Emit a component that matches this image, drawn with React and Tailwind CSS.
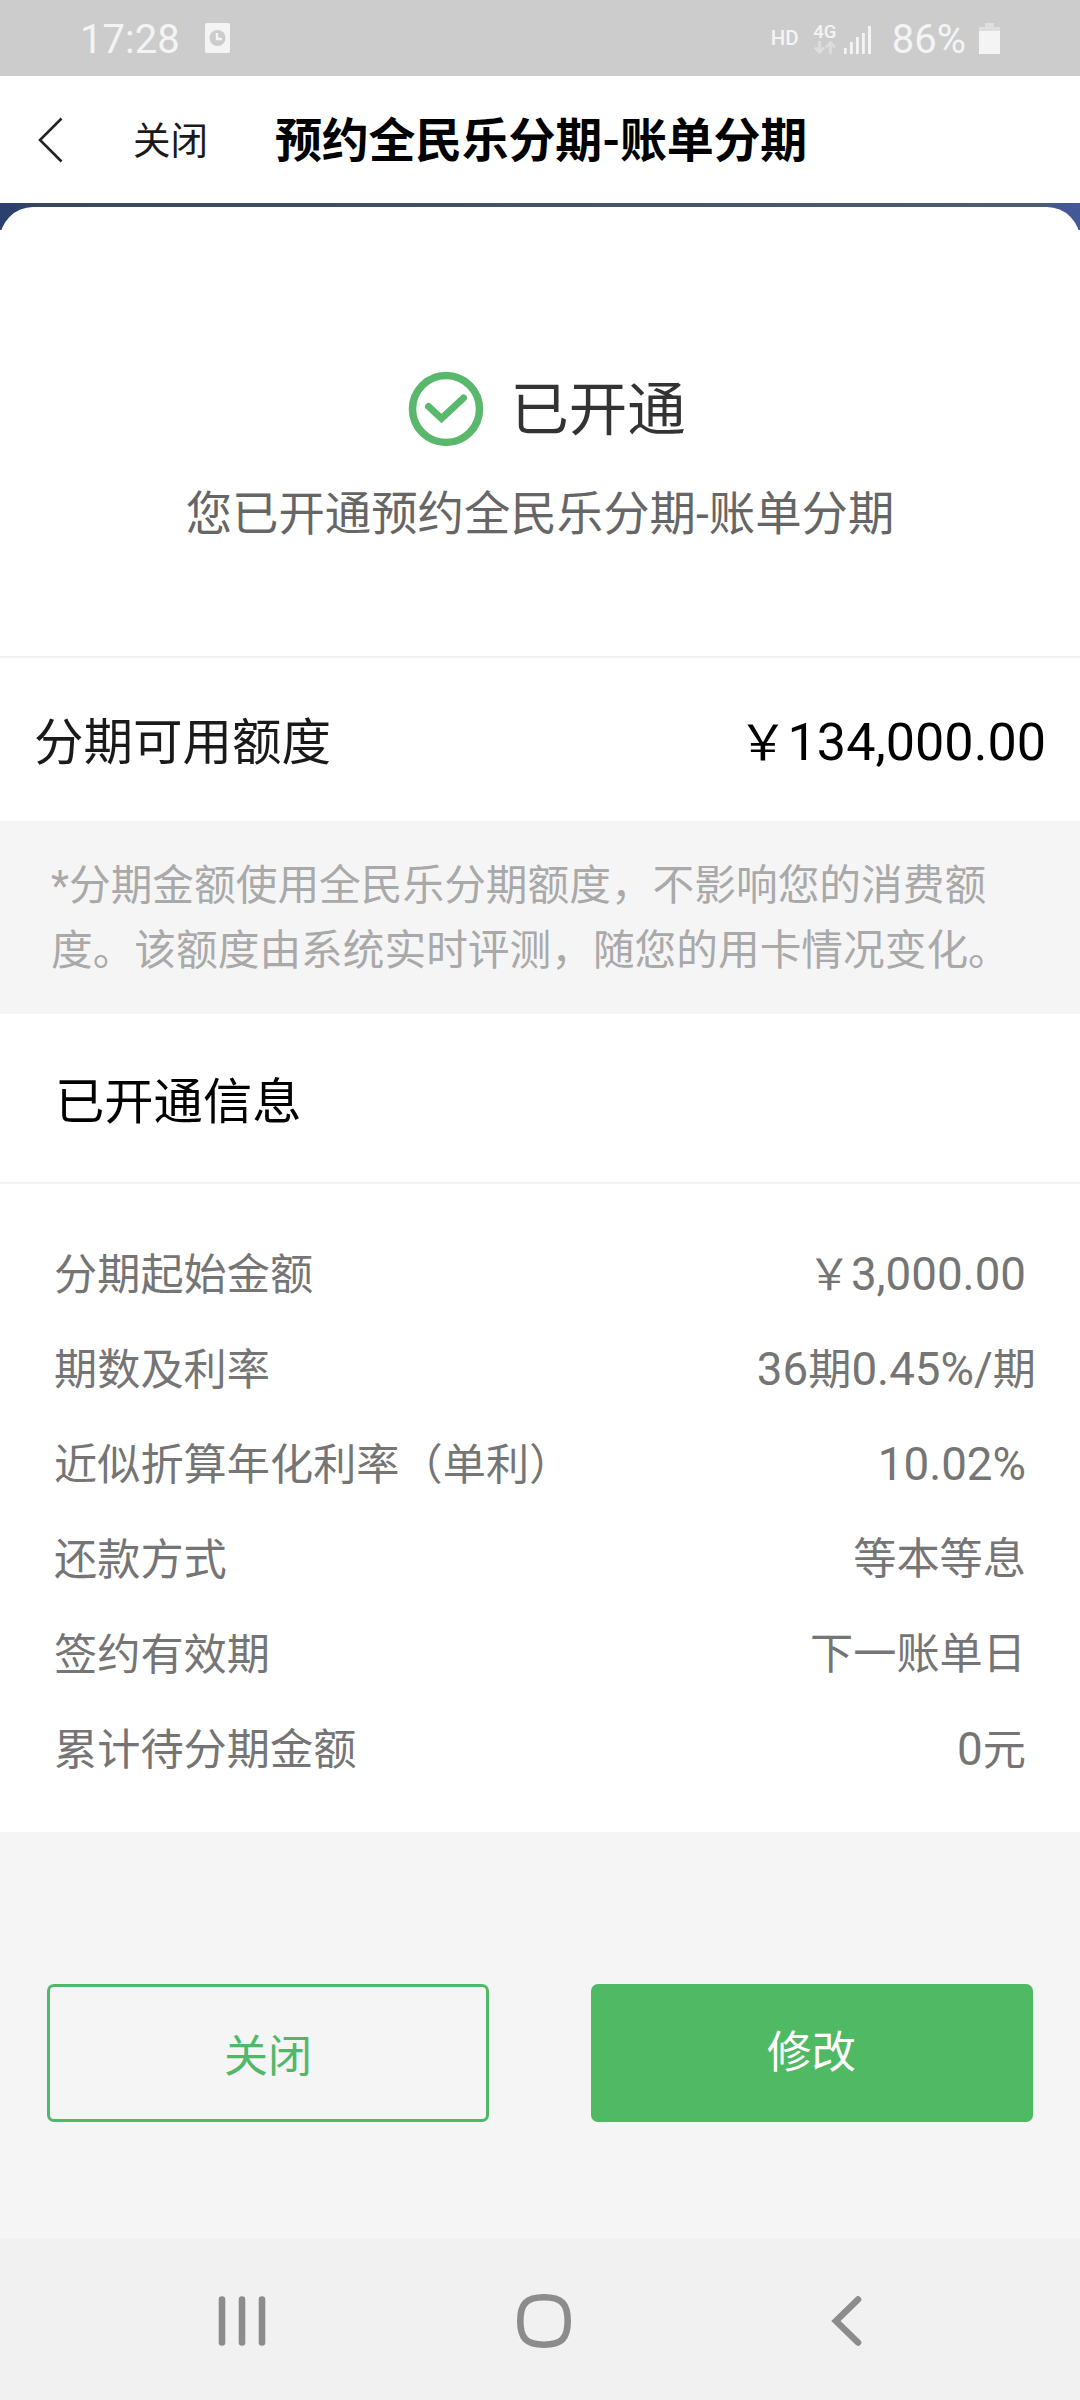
import { Fragment } from "react"

const details = [
  { label: "分期起始金额", value: "￥3,000.00" },
  { label: "期数及利率", value: "36期0.45%/期", wide: true },
  { label: "近似折算年化利率（单利）", value: "10.02%" },
  { label: "还款方式", value: "等本等息" },
  { label: "签约有效期", value: "下一账单日" },
  { label: "累计待分期金额", value: "0元" },
]

// 数字和西文比汉字略大一号
const Mixed = ({ text }) =>
  text.split(/([\x20-\x7e]+)/).map((part, i) =>
    i % 2 ? (
      <span key={i} className="text-[1.058em]">{part}</span>
    ) : (
      <Fragment key={i}>{part}</Fragment>
    )
  )

const StatusBar = () => (
  <div className="h-[76px] bg-[#cccccc] text-[#f4f4f4] flex items-center pl-[80px] pr-[80px]">
    <span className="text-[40px] leading-none w-[125px] pt-[4px]">17:28</span>
    <svg width="25" height="30" viewBox="0 0 25 30">
      <rect width="25" height="30" rx="2" fill="#f4f4f4" />
      <circle cx="12.5" cy="15" r="8" fill="#cccccc" />
      <path d="M12 10v6h5" fill="none" stroke="#f4f4f4" strokeWidth="2.4" />
    </svg>
    <div className="ml-auto flex items-center">
      <span className="text-[20.5px] leading-none font-medium mr-[14px]">HD</span>
      <div className="flex flex-col items-center w-[24px] mr-[7px]">
        <span className="text-[18.5px] leading-[18px] font-medium">4G</span>
        <svg width="22" height="13" viewBox="0 0 22 13" fill="none" stroke="#dedede" strokeWidth="2.6">
          <path d="M5.5 0v11M1 6.5l4.5 5 4.5-5" />
          <path d="M16.5 13V2M12 6.5l4.5-5 4.5 5" />
        </svg>
      </div>
      <svg width="27" height="28" viewBox="0 0 27 28" fill="#f4f4f4" className="mr-[21px] mt-[3px]">
        <rect x="0" y="22" width="2.6" height="6" />
        <rect x="6" y="16" width="2.8" height="12" />
        <rect x="12" y="11" width="2.8" height="17" />
        <rect x="18" y="7" width="2.8" height="21" />
        <rect x="24" y="0" width="3" height="28" />
      </svg>
      <span className="text-[40px] leading-none mr-[13px] pt-[4px]">86%</span>
      <svg width="21" height="31" viewBox="0 0 21 31">
        <path d="M6 0h9v4h6v5H0V4h6z" fill="#dedede" />
        <path d="M0 8h21v23H0z" fill="#f4f4f4" />
      </svg>
    </div>
  </div>
)

const NavBar = () => (
  <div className="h-[162px] bg-[#f1f1f1] flex items-center pt-[4px]">
    <svg width="48" height="50" viewBox="0 0 48 50" className="ml-[218px]" stroke="#8c8c8c" strokeWidth="6.6" strokeLinecap="round">
      <path d="M4 3.5v43M24 3.5v43M44 3.5v43" />
    </svg>
    <svg width="54" height="54" viewBox="0 0 54 54" className="ml-[251px]" fill="none" stroke="#8c8c8c" strokeWidth="6.6">
      <path d="M27 3.3C44.5 3.3 50.7 9.5 50.7 27S44.5 50.7 27 50.7 3.3 44.5 3.3 27 9.5 3.3 27 3.3z" />
    </svg>
    <svg width="31" height="50" viewBox="0 0 31 50" className="ml-[260px]" fill="none" stroke="#8c8c8c" strokeWidth="6.6" strokeLinecap="round">
      <path d="M27 3.5L5 25l22 21.5" />
    </svg>
  </div>
)

export default function App() {
  return (
    <div className="w-[1080px] h-[2400px] bg-white flex flex-col overflow-hidden font-[Roboto,'Noto_Sans_CJK_SC',sans-serif]">
      <StatusBar />

      {/* 标题栏 */}
      <div className="h-[127px] flex items-center bg-white">
        <svg width="26" height="46" viewBox="0 0 26 46" className="ml-[37px]" fill="none" stroke="#222" strokeWidth="2.6">
          <path d="M24.5 1.5L3 23l21.5 21.5" />
        </svg>
        <span className="ml-[70px] pt-[4px] text-[37.5px] leading-none text-[#1a1a1a]">关闭</span>
        <h1 className="ml-[67px] pt-[2px] text-[47px] leading-none font-bold tracking-[-0.3px] text-black">
          预约全民乐分期-账单分期
        </h1>
      </div>

      {/* 开通状态 */}
      <div className="h-[27px] bg-[linear-gradient(90deg,#2b4070_0%,#2f4168_2%,#3c465a_4%,#46526a_50%,#4f5b6e_96%,#445894_98%,#435998_100%)] pt-[4px] overflow-hidden shrink-0">
        <div className="h-[60px] bg-white rounded-t-[33px]" />
      </div>
      <div className="h-[426px] flex flex-col items-center pt-[136px]">
        <div className="flex items-center h-[86px] pl-[14px]">
          <svg width="76" height="76" viewBox="0 0 76 76" fill="none" stroke="#5ab86c">
            <circle cx="38" cy="38" r="33.5" strokeWidth="7.5" />
            <path d="M20.5 35.5L33.5 47.5 55.5 27" strokeWidth="7" strokeLinecap="round" />
          </svg>
          <span className="ml-[26px] pt-[2px] text-[58.5px] leading-none text-[#333]">已开通</span>
        </div>
        <p className="mt-[27px] text-[46.4px] leading-[70px] text-[#666]">
          您已开通预约全民乐分期-账单分期
        </p>
      </div>

      {/* 可用额度 */}
      <div className="h-[165px] border-t-2 border-[#f2f2f2] flex items-center justify-between pt-[7px] pl-[34px] pr-[34px]">
        <span className="text-[49.5px] leading-none text-[#1a1a1a] pt-[2px]">分期可用额度</span>
        <span className="text-[49.3px] leading-none text-black"><Mixed text="￥134,000.00" /></span>
      </div>
      <div className="h-[193px] bg-[#f5f5f5] pt-[32px] pl-[51px] text-[41.7px] leading-[65px] text-[#a9a9a9]">
        <p>*分期金额使用全民乐分期额度，不影响您的消费额</p>
        <p>度。该额度由系统实时评测，随您的用卡情况变化。</p>
      </div>

      {/* 已开通信息 */}
      <div className="h-[170px] border-b-2 border-[#f4f4f4] flex items-center pt-[9px] pl-[55px]">
        <h2 className="text-[49.3px] leading-none text-black">已开通信息</h2>
      </div>
      <div className="h-[648px] pt-[44px] flex flex-col">
        {details.map((d) => (
          <div key={d.label} className="h-[95px] flex items-center justify-between pl-[54px] text-[43.2px] leading-none text-[#757575]">
            <span>{d.label}</span>
            <span className={d.wide ? "mr-[44px] -mt-[2px]" : "mr-[54px] -mt-[2px]"}>
              <Mixed text={d.value} />
            </span>
          </div>
        ))}
      </div>

      {/* 底部按钮 */}
      <div className="flex-1 bg-[#f5f5f5] flex justify-between items-start pt-[152px] px-[47px]">
        <button className="w-[442px] h-[138px] rounded-[7px] border-3 border-[#50b868] text-[#50b868] text-[44px] leading-none pt-[7px]">
          关闭
        </button>
        <button className="w-[442px] h-[138px] rounded-[7px] bg-[#50b963] text-white text-[44.5px] leading-none pt-[1px] pr-[1px]">
          修改
        </button>
      </div>
      <NavBar />
    </div>
  )
}
